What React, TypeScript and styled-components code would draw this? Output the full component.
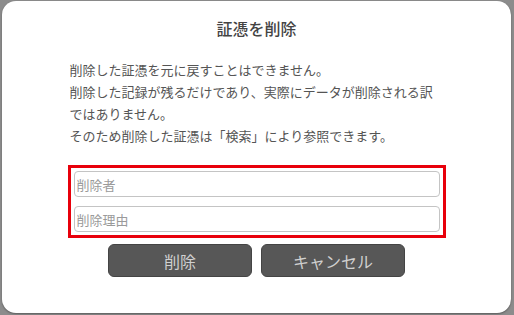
import React from "react";
import styled, { createGlobalStyle } from "styled-components";

const GlobalStyle = createGlobalStyle`
  html, body {
    margin: 0;
    padding: 0;
    background: #8c8c8c;
  }
  body {
    font-family: "Noto Sans CJK JP", "Noto Sans", sans-serif;
  }
`;

const Dialog = styled.div`
  box-sizing: border-box;
  width: 509px;
  height: 312px;
  margin: 1px 3px 2px 2px;
  padding-top: 16px;
  background: #fff;
  border-radius: 14px;
  box-shadow: 0 1px 2px rgba(0, 0, 0, 0.35);
  display: flex;
  flex-direction: column;
  align-items: center;
`;

const Title = styled.h2`
  margin: 0;
  font-size: 16px;
  font-weight: 500;
  line-height: 22px;
  color: #444;
`;

const Message = styled.div`
  width: 374px;
  margin-top: 20px;
  font-size: 13px;
  line-height: 22px;
  color: #555;
`;

const Line = styled.div`
  white-space: nowrap;
`;

const Highlight = styled.div`
  box-sizing: border-box;
  width: 378px;
  margin-top: 18px;
  padding: 3px;
  border: 3px solid #e8000b;
  display: flex;
  flex-direction: column;
  gap: 9px;
`;

const Field = styled.input`
  box-sizing: border-box;
  width: 100%;
  height: 26px;
  padding: 0 2px;
  border: 1px solid #c4c4c4;
  border-radius: 4px;
  font-family: inherit;
  font-size: 13px;
  color: #333;
  outline: none;
  &::placeholder {
    color: #9a9a9a;
  }
`;

const Actions = styled.div`
  margin-top: 6px;
  display: flex;
  gap: 9px;
`;

const Button = styled.button`
  width: 144px;
  height: 33px;
  border: 1px solid #444;
  border-radius: 6px;
  background: #575757;
  color: #d0d0d0;
  font-family: inherit;
  font-size: 16px;
  font-weight: 400;
  cursor: pointer;
`;

const App: React.FC = () => {
  return (
    <>
      <GlobalStyle />
      <Dialog>
        <Title>証憑を削除</Title>
        <Message>
          <Line>削除した証憑を元に戻すことはできません。</Line>
          <Line>削除した記録が残るだけであり、実際にデータが削除される訳</Line>
          <Line>ではありません。</Line>
          <Line>そのため削除した証憑は「検索」により参照できます。</Line>
        </Message>
        <Highlight>
          <Field placeholder="削除者" />
          <Field placeholder="削除理由" />
        </Highlight>
        <Actions>
          <Button>削除</Button>
          <Button>キャンセル</Button>
        </Actions>
      </Dialog>
    </>
  );
};

export default App;
